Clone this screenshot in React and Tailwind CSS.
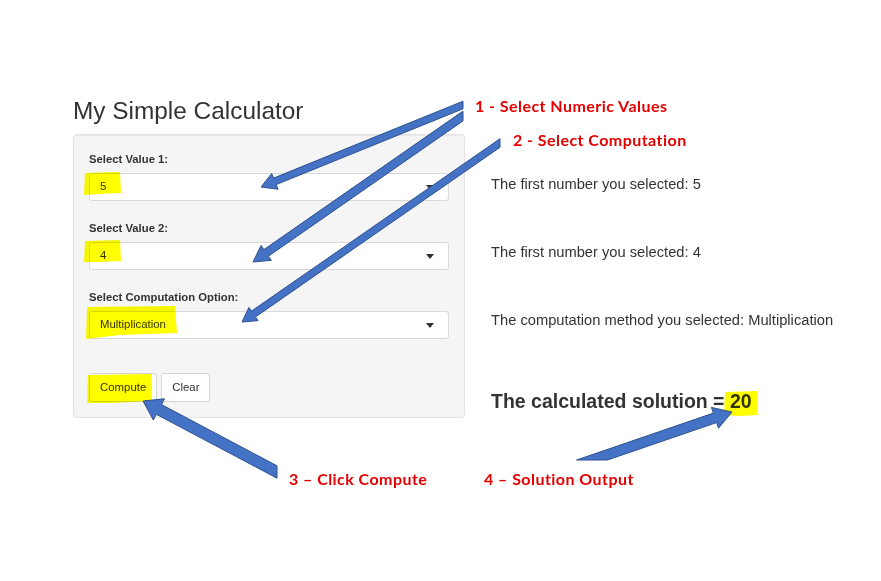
import React from 'react';

// annotation arrows: tail -> tip, shaft width sw, head width hw, head length hl
const arrows = [
  { tail: [463, 105], tip: [261, 187], sw: 7, hw: 17, hl: 15, cut: 'x' },
  { tail: [463, 116], tip: [253, 262], sw: 8, hw: 18, hl: 16, cut: 'x' },
  { tail: [500, 143], tip: [242, 322], sw: 7, hw: 16, hl: 14, cut: 'x' },
  { tail: [277, 472], tip: [143, 401], sw: 11, hw: 24, hl: 18, cut: 'x' },
  { tail: [592, 460], tip: [732, 412], sw: 10, hw: 22, hl: 18, cut: 'y' },
];

function arrowPoints({ tail, tip, sw, hw, hl, cut }) {
  const [x1, y1] = tail;
  const [x2, y2] = tip;
  const len = Math.hypot(x2 - x1, y2 - y1);
  const ux = (x2 - x1) / len;
  const uy = (y2 - y1) / len;
  const nx = -uy;
  const ny = ux;
  const bx = x2 - ux * hl;
  const by = y2 - uy * hl;

  const edge = (s) => {
    const px = bx + nx * s;
    const py = by + ny * s;
    let t;
    if (cut === 'x') t = (px - x1) / ux;
    else if (cut === 'y') t = (py - y1) / uy;
    else t = (px - x1) * ux + (py - y1) * uy;
    return { tail: [px - ux * t, py - uy * t], base: [px, py] };
  };

  const a = edge(sw / 2);
  const b = edge(-sw / 2);
  const pts = [
    a.tail,
    a.base,
    [bx + (nx * hw) / 2, by + (ny * hw) / 2],
    [x2, y2],
    [bx - (nx * hw) / 2, by - (ny * hw) / 2],
    b.base,
    b.tail,
  ];
  return pts.map((p) => p.map((v) => v.toFixed(1)).join(',')).join(' ');
}

function Select({ value }) {
  return (
    <div className="h-[28px] flex items-center justify-between pl-[10px] pr-[14px] bg-white border border-[#d9d9d9] rounded-[3px] text-[11.4px] text-[#333]">
      <span>{value}</span>
      <span className="w-0 h-0 border-x-[4px] border-t-[5px] border-x-transparent border-t-[#333]" />
    </div>
  );
}

function Field({ label, value, last }) {
  return (
    <div className={last ? 'mb-[34px]' : 'mb-[19px]'}>
      <div className="text-[11.3px] leading-[16px] font-bold text-[#333] mb-[6px]">{label}</div>
      <Select value={value} />
    </div>
  );
}

export default function App() {
  return (
    <div className="relative w-[881px] h-[581px] overflow-hidden bg-white font-['Liberation_Sans',Arial,sans-serif] text-[#333]">
      <div className="pl-[73px] pt-[97px]">
        <h2 className="text-[24.4px] leading-[27px] font-normal text-[#333] mb-[10px]">My Simple Calculator</h2>

        <div className="flex gap-[26px]">
          {/* Sidebar panel */}
          <div className="w-[392px] rounded-[4px] border border-[#e3e3e3] bg-[#f5f5f5] px-[15px] pt-[16px] pb-[15px] shadow-[inset_0_1px_1px_rgba(0,0,0,0.05)]">
            <Field label="Select Value 1:" value="5" />
            <Field label="Select Value 2:" value="4" />
            <Field label="Select Computation Option:" value="Multiplication" last />
            <div className="flex gap-[4px]">
              <button className="h-[29px] px-[10px] bg-white border border-[#d4d4d4] rounded-[3px] text-[11.4px] text-[#333]">Compute</button>
              <button className="h-[29px] px-[10px] bg-white border border-[#d4d4d4] rounded-[3px] text-[11.4px] text-[#333]">Clear</button>
            </div>
          </div>

          {/* Main output */}
          <div className="pt-[40px] flex flex-col">
            <p className="text-[14.7px] leading-[20px] mb-[48px]">The first number you selected: 5</p>
            <p className="text-[14.7px] leading-[20px] mb-[48px]">The first number you selected: 4</p>
            <p className="text-[14.7px] leading-[20px] mb-[58px]">The computation method you selected: Multiplication</p>
            <p className="text-[19.5px] leading-[26px] font-bold">The calculated solution = 20</p>
          </div>
        </div>
      </div>

      {/* Highlighter marks */}
      <svg className="absolute inset-0 pointer-events-none mix-blend-multiply" width="881" height="581">
        <g fill="#ffff00">
          <path d="M85 173 L120 172 L121 193 L98 194 L84 195 Z" />
          <path d="M85 241 L120 240 L121 261 L98 262 L84 262 Z" />
          <path d="M87 307 L175 306 L177 333 L120 335 L86 339 Z" />
          <path d="M88 375 L151 374 L152 401 L110 403 L87 403 Z" />
          <path d="M725 392 L757 391 L757 415 L740 416 L724 415 Z" />
        </g>
      </svg>

      {/* Arrows */}
      <svg className="absolute inset-0 pointer-events-none" width="881" height="581">
        {arrows.map((a, i) => (
          <polygon key={i} points={arrowPoints(a)} fill="#4472c4" stroke="#2f528f" strokeWidth="1" strokeLinejoin="miter" />
        ))}
      </svg>

      {/* Annotation labels */}
      <div className="absolute font-['Lato',sans-serif] font-bold text-[16px] tracking-[0.45px] leading-none text-[#e60000] left-[475px] top-[98px] whitespace-nowrap">1 - Select Numeric Values</div>
      <div className="absolute font-['Lato',sans-serif] font-bold text-[16px] tracking-[0.45px] leading-none text-[#e60000] left-[513px] top-[132px] whitespace-nowrap">2 - Select Computation</div>
      <div className="absolute font-['Lato',sans-serif] font-bold text-[16px] tracking-[0.45px] leading-none text-[#e60000] left-[289px] top-[471px] whitespace-nowrap">3 – Click Compute</div>
      <div className="absolute font-['Lato',sans-serif] font-bold text-[16px] tracking-[0.45px] leading-none text-[#e60000] left-[484px] top-[471px] whitespace-nowrap">4 – Solution Output</div>
    </div>
  );
}
